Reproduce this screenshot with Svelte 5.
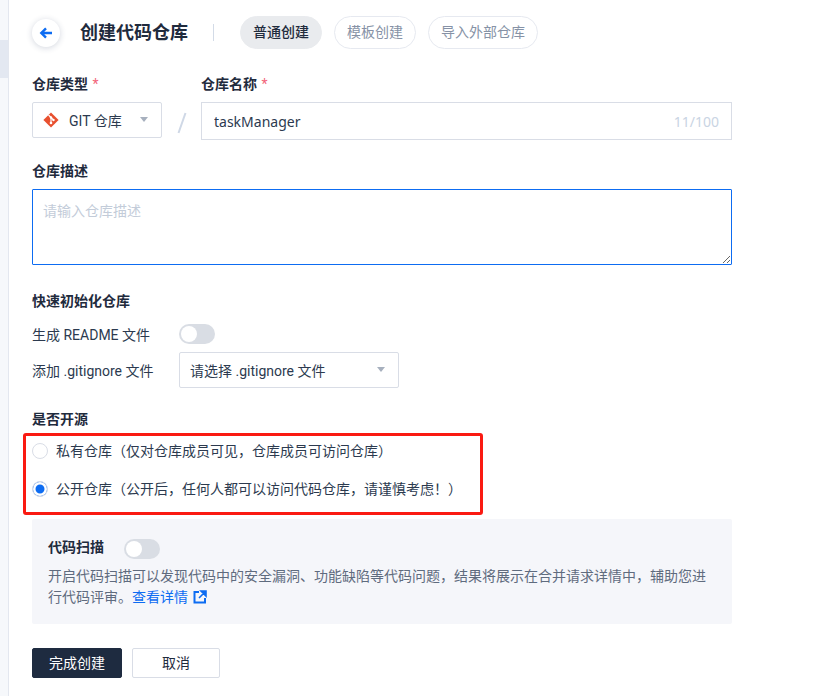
<script>
  let name = 'taskManager';
  let visibility = 'public';
  const tabs = [
    { label: '普通创建', active: true },
    { label: '模板创建', active: false },
    { label: '导入外部仓库', active: false }
  ];
</script>

<div class="page">
  <aside class="rail"><div class="rail-active"></div></aside>

  <main class="content">
    <header class="head">
      <button class="back" aria-label="返回">
        <svg width="14" height="14" viewBox="0 0 14 14">
          <path d="M13 7H2.500M7 2.300 2.300 7 7 11.700" fill="none" stroke="#0d6cf2" stroke-width="2.400" />
        </svg>
      </button>
      <h1>创建代码仓库</h1>
      <span class="head-sep"></span>
      <div class="tabs">
        {#each tabs as tab}
          <span class="tab" class:active={tab.active}>{tab.label}</span>
        {/each}
      </div>
    </header>

    <div class="repo-row">
      <div class="field">
        <div class="label">仓库类型 <i>*</i></div>
        <div class="select type-select">
          <svg class="git" width="16" height="16" viewBox="0 0 16 16">
            <path d="M8 .4 15.600 8 8 15.600.4 8z" fill="#e8502f" />
            <path d="M5.500 3 8 5.500M8 5.500V11M8 5.500 10.500 8" fill="none" stroke="#fff" stroke-width="1.200" />
            <circle cx="8" cy="5.500" r="1.200" fill="#fff" />
            <circle cx="8" cy="11" r="1.300" fill="#fff" />
            <circle cx="10.500" cy="8" r="1.200" fill="#fff" />
          </svg>
          <span>GIT 仓库</span>
          <b class="caret"></b>
        </div>
      </div>
      <svg class="slash" width="10" height="22" viewBox="0 0 10 22">
        <path d="M8.500 1 1.500 21" stroke="#cfd8e6" stroke-width="2" fill="none" />
      </svg>
      <div class="field grow">
        <div class="label">仓库名称 <i>*</i></div>
        <div class="input">
          <input bind:value={name} />
          <span class="count">11/100</span>
        </div>
      </div>
    </div>

    <div class="label desc-label">仓库描述</div>
    <textarea class="desc" placeholder="请输入仓库描述"></textarea>

    <div class="label init-label">快速初始化仓库</div>
    <div class="init-row readme">
      <span class="init-name">生成 README 文件</span>
      <span class="switch"></span>
    </div>
    <div class="init-row">
      <span class="init-name">添加 .gitignore 文件</span>
      <div class="select ignore-select">
        <span>请选择 .gitignore 文件</span>
        <b class="caret"></b>
      </div>
    </div>

    <div class="label open-label">是否开源</div>
    <div class="radios">
      <label class="radio">
        <input type="radio" bind:group={visibility} value="private" />
        <span class="dot"></span>
        <span class="radio-text">私有仓库（仅对仓库成员可见，仓库成员可访问仓库）</span>
      </label>
      <label class="radio">
        <input type="radio" bind:group={visibility} value="public" />
        <span class="dot"></span>
        <span class="radio-text">公开仓库（公开后，任何人都可以访问代码仓库，请谨慎考虑！）</span>
      </label>
      <div class="mark"></div>
    </div>

    <section class="scan">
      <div class="scan-head">
        <span class="label">代码扫描</span>
        <span class="switch"></span>
      </div>
      <p>
        开启代码扫描可以发现代码中的安全漏洞、功能缺陷等代码问题，结果将展示在合并请求详情中，辅助您进行代码评审。<a href="#top">查看详情
          <svg width="14" height="14" viewBox="0 0 14 14">
            <path d="M6 2H1.500v10.500H12V8" fill="none" stroke="#0d6cf2" stroke-width="2" />
            <path d="M8 1h5v5zM11.500 2.500 6 8" fill="#0d6cf2" stroke="#0d6cf2" stroke-width="1.600" />
          </svg></a>
      </p>
    </section>

    <div class="actions">
      <button class="btn primary">完成创建</button>
      <button class="btn">取消</button>
    </div>
  </main>
</div>

<style>
  :global(body) {
    margin: 0;
    background: #fff;
    font-family: Roboto, "Noto Sans CJK SC", sans-serif;
    color: #2c3a4f;
  }

  .page {
    display: flex;
    height: 696px;
    overflow: hidden;
  }

  .rail {
    width: 8px;
    flex: none;
    padding-top: 40px;
    background: #f6f8fb;
    border-right: 1px solid #e3e7ef;
  }

  .rail-active {
    height: 38px;
    background: #e3e8f1;
  }

  .content {
    width: 700px;
    padding: 16px 0 0 23px;
  }

  .head {
    display: flex;
    align-items: center;
    height: 33px;
  }

  .back {
    width: 28px;
    height: 28px;
    padding: 0;
    border: none;
    border-radius: 50%;
    background: #fff;
    box-shadow: 0 1px 6px rgba(30, 50, 90, 0.2);
    display: flex;
    align-items: center;
    justify-content: center;
  }

  h1 {
    margin: 0 0 0 20px;
    font-size: 18px;
    line-height: 33px;
    font-weight: 700;
    color: #1f2b3d;
  }

  .head-sep {
    width: 1px;
    height: 17px;
    margin: 0 26px 0 25px;
    background: #d3dbe7;
  }

  .tabs {
    display: flex;
    gap: 12px;
  }

  .tab {
    height: 31px;
    line-height: 31px;
    padding: 0 12px;
    border: 1px solid #e6e9f0;
    border-radius: 17px;
    font-size: 14px;
    color: #8692a6;
  }

  .tab.active {
    background: #e9ebee;
    border-color: #e9ebee;
    color: #1f2b3d;
    font-weight: 500;
  }

  .label {
    font-size: 14px;
    line-height: 20px;
    font-weight: 700;
    color: #1f2b3d;
  }

  .label i {
    font-style: normal;
    font-weight: 400;
    color: #f2647a;
    margin-left: 1px;
  }

  .repo-row {
    display: flex;
    align-items: flex-start;
    margin-top: 25px;
  }

  .field .label {
    margin-bottom: 8px;
  }

  .grow {
    flex: 1;
  }

  .select {
    display: flex;
    align-items: center;
    box-sizing: border-box;
    height: 36px;
    border: 1px solid #d9dde6;
    border-radius: 2px;
    font-size: 14px;
    position: relative;
    background: #fff;
  }

  .type-select {
    width: 130px;
    padding-left: 10px;
  }

  .git {
    margin-right: 10px;
  }

  .caret {
    position: absolute;
    right: 13px;
    top: 14px;
    width: 0;
    height: 0;
    border-left: 4px solid transparent;
    border-right: 4px solid transparent;
    border-top: 5px solid #a7b0be;
  }

  .slash {
    margin: 38px 14px 0 15px;
  }

  .input {
    display: flex;
    align-items: center;
    box-sizing: border-box;
    height: 38px;
    border: 1px solid #d9dde6;
    padding: 0 12px;
  }

  .input input {
    flex: 1;
    min-width: 0;
    border: none;
    outline: none;
    padding: 0;
    font-family: "Noto Sans", "Noto Sans CJK SC", sans-serif;
    font-size: 14px;
    color: #2c3a4f;
  }

  .count {
    font-family: "Noto Sans", sans-serif;
    font-size: 14px;
    color: #c9d4e3;
  }

  .desc-label {
    margin-top: 21px;
  }

  .desc {
    display: block;
    box-sizing: border-box;
    width: 700px;
    height: 76px;
    margin-top: 8px;
    padding: 10px 10px;
    border: 1px solid #0d6cf2;
    border-radius: 1px;
    outline: none;
    font: inherit;
    font-size: 14px;
  }

  .desc::placeholder {
    color: #c3ccd9;
  }

  .init-label {
    margin-top: 26px;
  }

  .init-row {
    display: flex;
    align-items: center;
    font-size: 14px;
  }

  .readme {
    height: 20px;
    margin: 13px 0 8px;
  }

  .init-name {
    width: 147px;
  }

  .switch {
    display: inline-block;
    position: relative;
    width: 36px;
    height: 20px;
    border-radius: 10px;
    background: #d9dde4;
  }

  .switch::after {
    content: "";
    position: absolute;
    left: 2px;
    top: 2px;
    width: 16px;
    height: 16px;
    border-radius: 50%;
    background: #fff;
  }

  .ignore-select {
    width: 220px;
    padding-left: 10px;
  }

  .open-label {
    margin-top: 21px;
  }

  .radios {
    position: relative;
    margin-top: 12px;
    height: 76px;
  }

  .radio {
    display: flex;
    align-items: center;
    height: 20px;
    margin-bottom: 18px;
    font-size: 14px;
  }

  .radio input {
    position: absolute;
    opacity: 0;
  }

  .radio-text {
    margin-bottom: 2px;
  }

  .dot {
    box-sizing: border-box;
    width: 16px;
    height: 16px;
    margin-right: 8px;
    border: 1px solid #d9dde6;
    border-radius: 50%;
    background: #fff;
  }

  .radio input:checked + .dot {
    background: #0d6cf2;
    box-shadow: inset 0 0 0 2.500px #fff;
  }

  .mark {
    position: absolute;
    left: -9px;
    top: -8px;
    box-sizing: border-box;
    width: 460px;
    height: 82px;
    border: 3px solid #fa1a12;
    border-radius: 3px;
    pointer-events: none;
  }

  .scan {
    box-sizing: border-box;
    height: 105px;
    margin-top: 2px;
    padding: 18px 16px 0;
    background: #f5f6fa;
    border-radius: 2px;
  }

  .scan-head {
    display: flex;
    align-items: center;
    gap: 20px;
  }

  .scan-head .label {
    margin-bottom: 3px;
  }

  .scan p {
    margin: 6px 0 0;
    font-size: 14px;
    line-height: 21px;
    color: #5f6b7e;
  }

  .scan a {
    color: #0d6cf2;
    text-decoration: none;
  }

  .scan svg {
    vertical-align: -2px;
    margin-left: 2px;
  }

  .actions {
    display: flex;
    gap: 10px;
    margin-top: 24px;
  }

  .btn {
    box-sizing: border-box;
    width: 88px;
    height: 30px;
    padding: 0 0 2px;
    border: 1px solid #d9dde6;
    border-radius: 2px;
    background: #fff;
    font: inherit;
    font-size: 14px;
    color: #1f2b3d;
  }

  .btn.primary {
    width: 90px;
    background: #1e2b40;
    border-color: #1e2b40;
    color: #fff;
  }
</style>
